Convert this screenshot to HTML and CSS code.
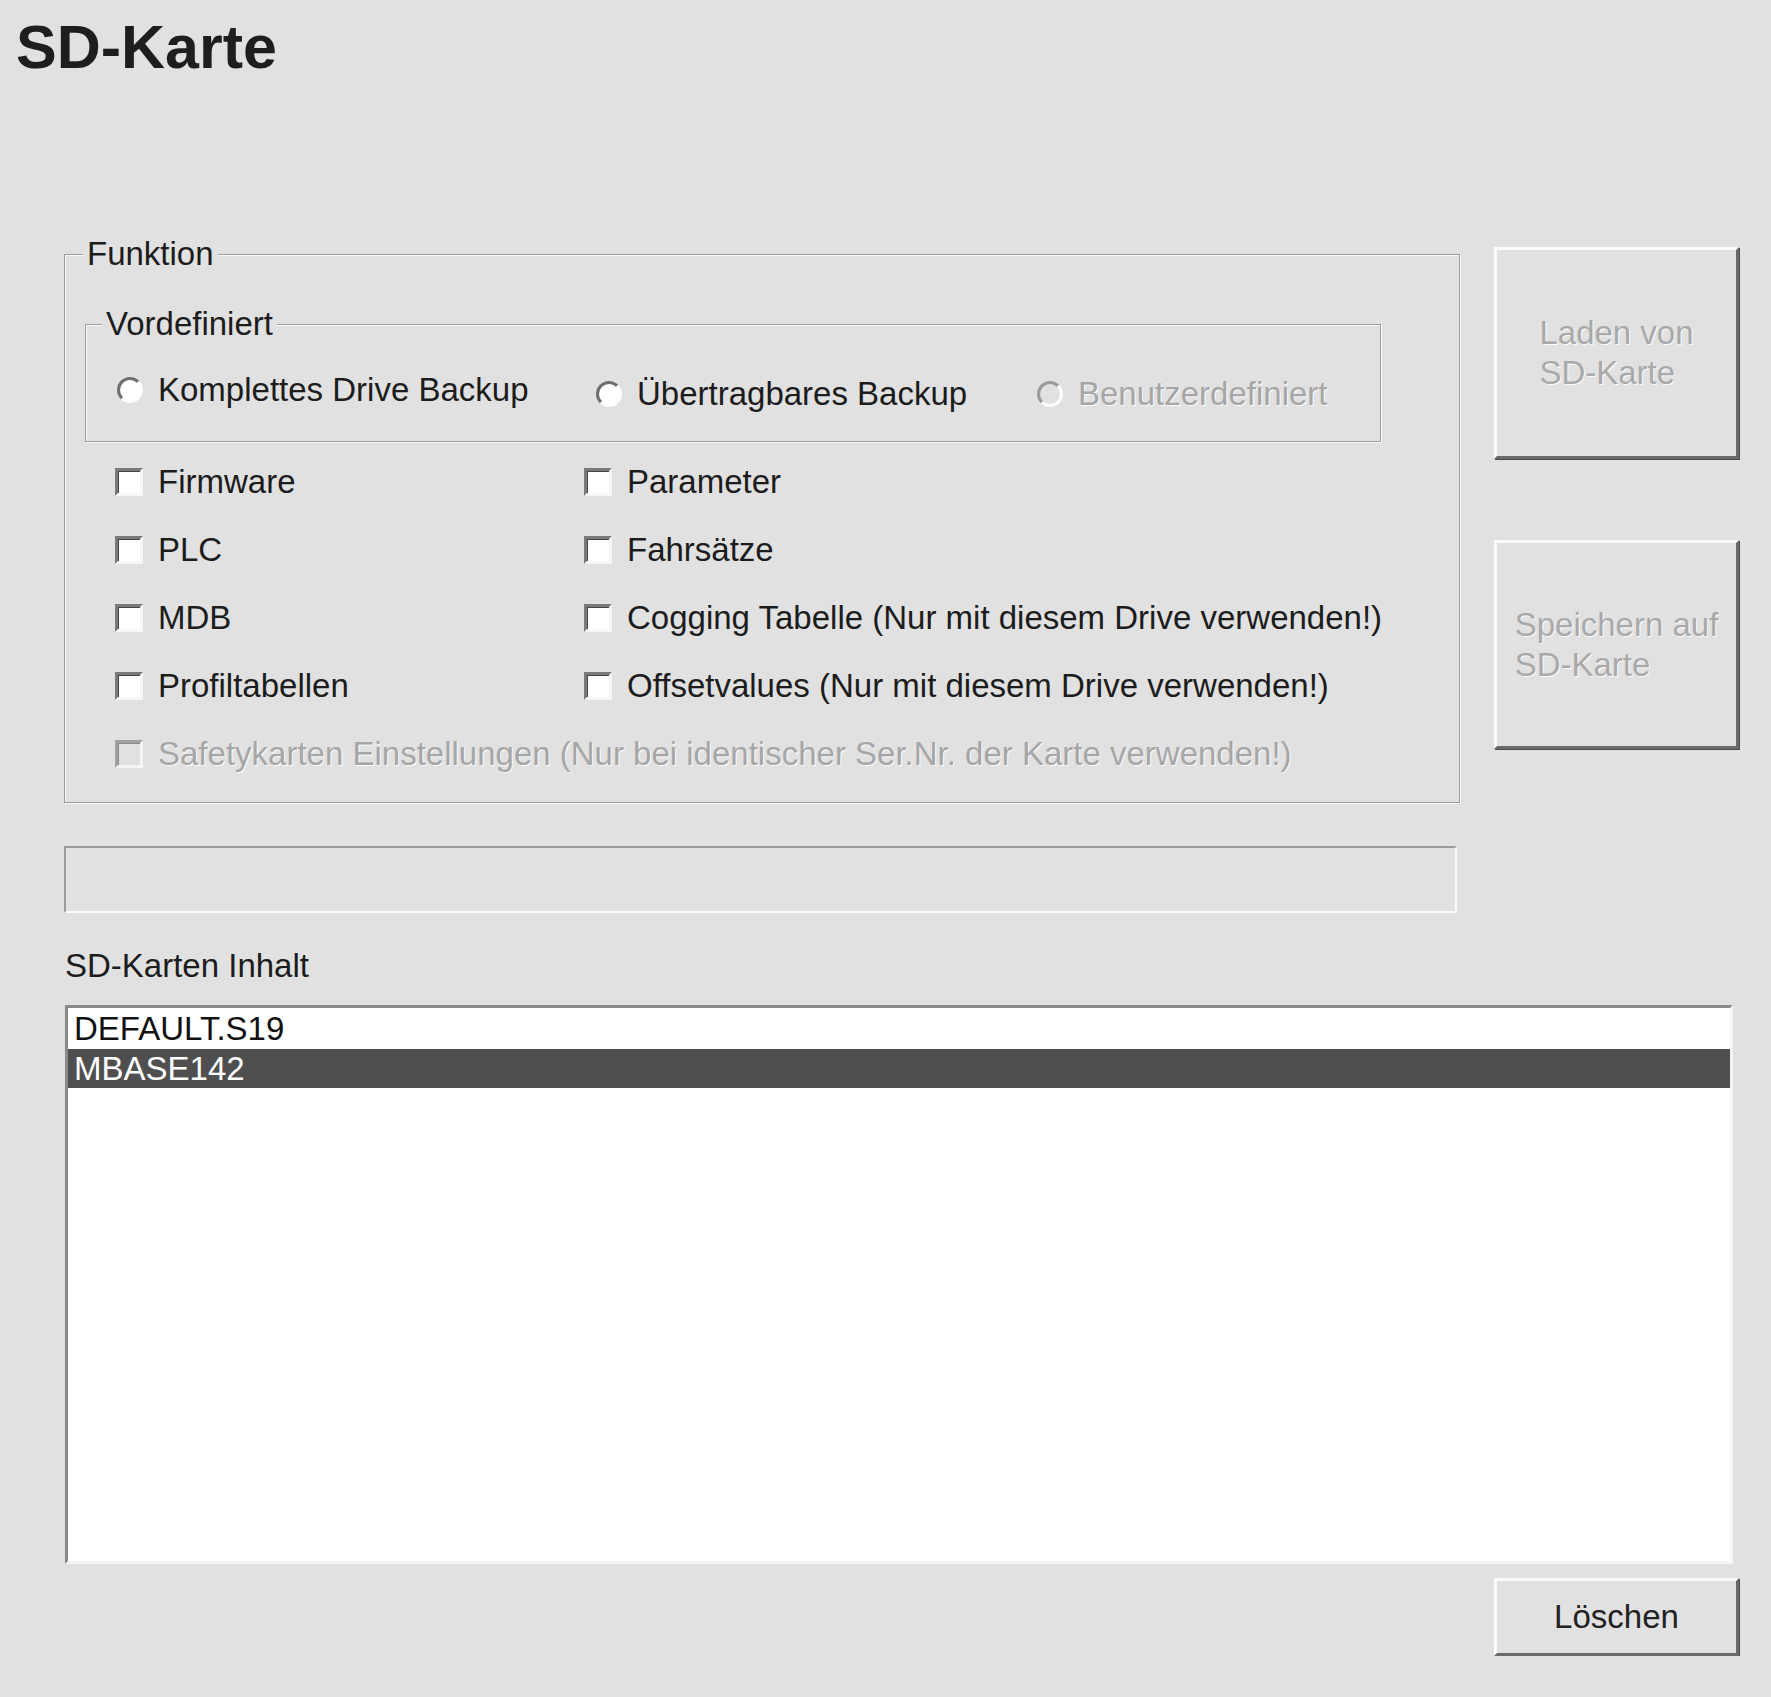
FILE: index.html
```html
<!DOCTYPE html>
<html lang="de">
<head>
  <meta charset="UTF-8">
  <title>SD-Karte</title>
  <link rel="stylesheet" href="styles.css">
</head>
<body>

<h1 class="title">SD-Karte</h1>

<!-- Funktion + Aktionen -->
<div class="main">
  <div class="left">
    <div class="group funktion">
      <span class="group-title">Funktion</span>

      <div class="group preset">
        <span class="group-title">Vordefiniert</span>
        <div class="radios">
          <label class="opt opt-1"><input type="radio" name="preset" class="rad"> Komplettes Drive Backup</label>
          <label class="opt opt-2"><input type="radio" name="preset" class="rad"> Übertragbares Backup</label>
          <label class="opt opt-3 disabled"><input type="radio" name="preset" class="rad" disabled> Benutzerdefiniert</label>
        </div>
      </div>

      <div class="checks">
        <label class="opt"><input type="checkbox" class="chk"> Firmware</label>
        <label class="opt"><input type="checkbox" class="chk"> Parameter</label>
        <label class="opt"><input type="checkbox" class="chk"> PLC</label>
        <label class="opt"><input type="checkbox" class="chk"> Fahrsätze</label>
        <label class="opt"><input type="checkbox" class="chk"> MDB</label>
        <label class="opt"><input type="checkbox" class="chk"> Cogging Tabelle (Nur mit diesem Drive verwenden!)</label>
        <label class="opt"><input type="checkbox" class="chk"> Profiltabellen</label>
        <label class="opt"><input type="checkbox" class="chk"> Offsetvalues (Nur mit diesem Drive verwenden!)</label>
        <label class="opt disabled span2"><input type="checkbox" class="chk" disabled> Safetykarten Einstellungen (Nur bei identischer Ser.Nr. der Karte verwenden!)</label>
      </div>
    </div>

    <div class="progress"></div>
  </div>

  <div class="actions">
    <button class="btn btn-big" disabled><span>Laden von<br>SD-Karte</span></button>
    <button class="btn btn-big" disabled><span>Speichern auf<br>SD-Karte</span></button>
  </div>
</div>

<!-- Inhalt der Karte -->
<div class="files">
  <div class="files-label">SD-Karten Inhalt</div>
  <ul class="filelist">
    <li>DEFAULT.S19</li>
    <li class="selected">MBASE142</li>
  </ul>
  <div class="files-foot">
    <button class="btn btn-delete">Löschen</button>
  </div>
</div>

</body>
</html>
```

FILE: styles.css
```css
body { margin: 0; background: #e1e1e1; color: #1c1c1c; font-family: "Liberation Sans", Arial, sans-serif; font-size: 33px; line-height: 40px; }
.title { margin: 17px 0 0 16px; font-size: 61px; line-height: 60px; font-weight: bold; color: #1e1e1e; }

.main { display: flex; align-items: flex-start; gap: 34px; margin: 170px 0 0 64px; }
.left { width: 1396px; padding-top: 7px; }

.group { position: relative; border: 1px solid #9c9c9c; box-shadow: 1px 1px 0 #fafafa, inset 1px 1px 0 #fafafa; }
.group-title { position: absolute; top: -21px; left: 18px; padding: 0 4px; background: #e1e1e1; }
.funktion { padding: 69px 0 14px 0; }
.preset { width: 1294px; height: 116px; margin-left: 20px; }
.preset .group-title { left: 16px; }

.opt { display: flex; align-items: center; gap: 15px; white-space: nowrap; }
.opt.disabled { color: #a6a6a6; text-shadow: 1px 1px 0 #fbfbfb; }

.radios { display: flex; align-items: flex-start; padding: 45px 0 0 31px; }
.opt-1 { width: 479px; }
.opt-2 { width: 441px; margin-top: 4px; }
.opt-3 { margin-top: 4px; }
.rad { appearance: none; margin: 0; width: 26px; height: 26px; border-radius: 50%; border: 3px solid; border-color: #6e6e6e #fdfdfd #fdfdfd #6e6e6e; background: #fff; }
.rad:disabled { background: #e1e1e1; border-color: #9a9a9a #fdfdfd #fdfdfd #9a9a9a; }

.checks { display: grid; grid-template-columns: 469px 1fr; grid-auto-rows: 68px; align-items: center; margin: 6px 0 0 50px; }
.span2 { grid-column: 1 / 3; }
.chk { appearance: none; margin: 0; width: 28px; height: 28px; border: 3px solid; border-color: #7a7a7a #f6f6f6 #f6f6f6 #7a7a7a; box-shadow: inset 1px 1px 0 #444; background: #fff; }
.chk:disabled { background: #e1e1e1; border-color: #a0a0a0 #f6f6f6 #f6f6f6 #a0a0a0; box-shadow: inset 1px 1px 0 #8a8a8a; }

.progress { width: 1393px; height: 67px; margin-top: 43px; box-sizing: border-box; border: 2px solid; border-color: #9c9c9c #fbfbfb #fbfbfb #9c9c9c; }

.actions { display: flex; flex-direction: column; gap: 81px; width: 245px; }
.btn { font-family: inherit; font-size: 33px; line-height: 40px; color: #222; background: #e1e1e1; padding: 0; box-sizing: border-box; border: 3px solid; border-color: #fbfbfb #6a6a6a #6a6a6a #fbfbfb; box-shadow: 1px 1px 0 #4a4a4a; }
.btn:disabled { color: #a9a9a9; text-shadow: 1px 1px 0 #fbfbfb; }
.btn-big { width: 245px; height: 212px; }
.btn-big + .btn-big { height: 209px; }
.btn-big span { display: inline-block; text-align: left; }

.files { margin: 33px 32px 0 65px; }
.files-label { height: 40px; }
.filelist { list-style: none; margin: 19px 6px 0 0; padding: 1px 0 0 0; height: 559px; box-sizing: border-box; background: #fff; border: 3px solid; border-color: #8a8a8a #f4f4f4 #f4f4f4 #8a8a8a; }
.filelist li { height: 39px; line-height: 39px; padding-left: 6px; color: #111; }
.filelist li.selected { background: #4f4f4f; color: #fff; margin-top: 1px; }
.files-foot { display: flex; justify-content: flex-end; margin-top: 14px; }
.btn-delete { width: 245px; height: 78px; }
```
